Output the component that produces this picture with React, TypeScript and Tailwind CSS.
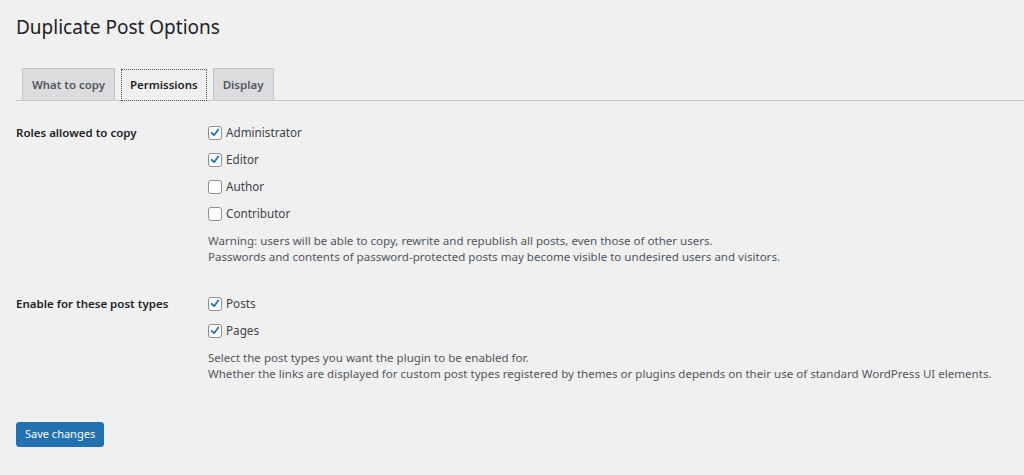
const font = { fontFamily: '"Noto Sans", "Open Sans", sans-serif' };

type Option = { label: string; checked: boolean };

const Checkbox = ({ label, checked }: Option) => (
  <label className="flex items-center gap-[4px] h-[27px] text-[11.7px] text-[#3c434a]">
    <span className="w-[14px] h-[14px] rounded-[3px] border border-[#8c8f94] bg-white flex items-center justify-center">
      {checked && (
        <svg viewBox="0 0 20 20" className="w-[13px] h-[13px]">
          <path d="M4.5 10.5 L8.5 14.5 L15.5 5" fill="none" stroke="#2271b1" strokeWidth="3" strokeLinecap="round" strokeLinejoin="round" />
        </svg>
      )}
    </span>
    {label}
  </label>
);

const Row = ({ title, options, notes }: { title: string; options: Option[]; notes: string[] }) => (
  <div className="flex">
    <div className="w-[192px] shrink-0 h-[27px] flex items-center font-semibold text-[11.5px] text-[#1d2327]">{title}</div>
    <div className="flex flex-col">
      {options.map((o) => (
        <Checkbox key={o.label} {...o} />
      ))}
      <div className="mt-[6px] text-[11.55px] leading-[16px] text-[#50575e] whitespace-nowrap">
        {notes.map((n) => (
          <p key={n}>{n}</p>
        ))}
      </div>
    </div>
  </div>
);

export default function App() {
  return (
    <div className="min-h-[475px] bg-[#f0f0f1] px-4 pt-[12px]" style={font}>
      <h1 className="text-[19px] font-normal text-[#1d2327] leading-[30px]">Duplicate Post Options</h1>

      <div className="mt-[26px] flex items-end gap-[6px] border-b border-[#c3c4c7] pl-[6px] -mr-4">
        <button className="h-[32px] px-[9px] border border-b-0 border-[#c3c4c7] bg-[#dcdcde] text-[11.4px] font-semibold text-[#50575e]">
          What to copy
        </button>
        <button className="h-[32px] px-[8px] border border-dotted border-[#555] bg-[#f0f0f1] text-[11.5px] font-semibold text-[#1d2327] -mb-px">
          Permissions
        </button>
        <button className="h-[32px] px-[9px] border border-b-0 border-[#c3c4c7] bg-[#dcdcde] text-[11.5px] font-semibold text-[#50575e]">
          Display
        </button>
      </div>

      <div className="mt-[18px] flex flex-col gap-[25px]">
        <Row
          title="Roles allowed to copy"
          options={[
            { label: 'Administrator', checked: true },
            { label: 'Editor', checked: true },
            { label: 'Author', checked: false },
            { label: 'Contributor', checked: false },
          ]}
          notes={[
            'Warning: users will be able to copy, rewrite and republish all posts, even those of other users.',
            'Passwords and contents of password-protected posts may become visible to undesired users and visitors.',
          ]}
        />
        <Row
          title="Enable for these post types"
          options={[
            { label: 'Posts', checked: true },
            { label: 'Pages', checked: true },
          ]}
          notes={[
            'Select the post types you want the plugin to be enabled for.',
            'Whether the links are displayed for custom post types registered by themes or plugins depends on their use of standard WordPress UI elements.',
          ]}
        />
      </div>

      <button className="mt-[40px] h-[25px] px-[8px] rounded-[3px] bg-[#2271b1] border border-[#2271b1] text-white text-[11px]">
        Save changes
      </button>
    </div>
  );
}
